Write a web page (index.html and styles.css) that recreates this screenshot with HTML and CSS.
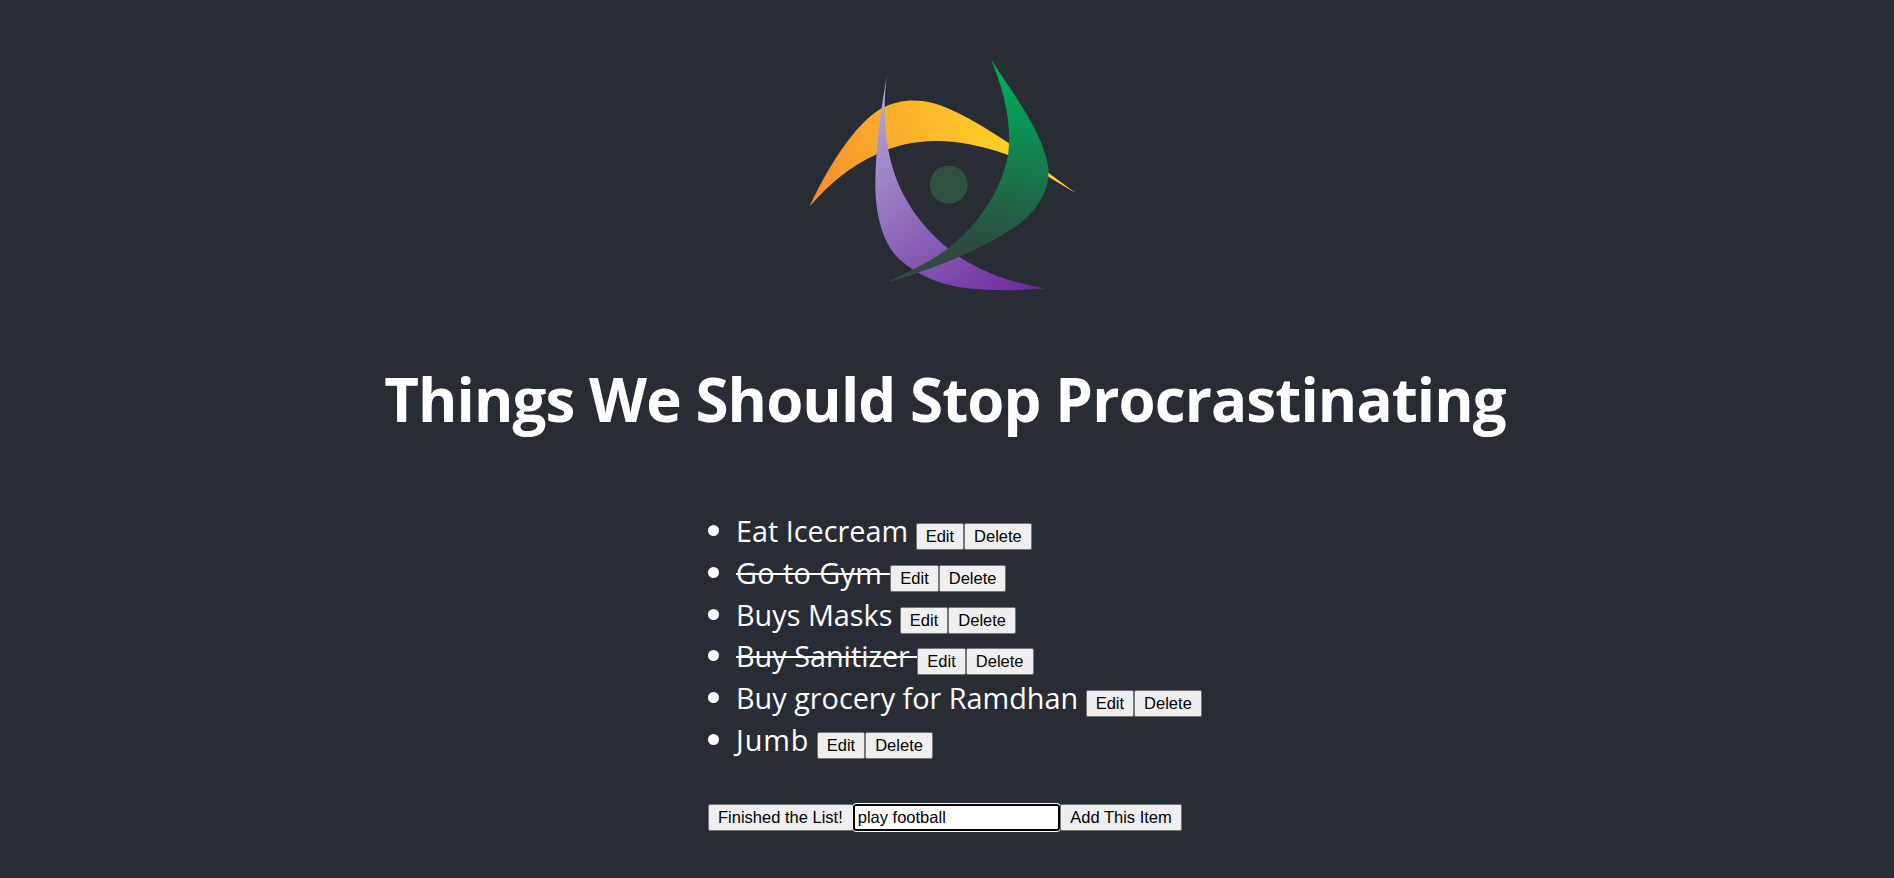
FILE: index.html
```html
<!DOCTYPE html>
<html lang="en">
<head>
<meta charset="utf-8">
<title>Things We Should Stop Procrastinating</title>
<link rel="stylesheet" href="styles.css">
</head>
<body>
<main class="app">
  <svg class="logo" viewBox="0 0 960 810" role="img" aria-label="Logo">
    <defs>
      <linearGradient id="gOrange" x1="88" y1="500" x2="690" y2="300" gradientUnits="userSpaceOnUse">
        <stop offset="0" stop-color="#f78c2f"/>
        <stop offset="1" stop-color="#ffd027"/>
      </linearGradient>
      <linearGradient id="gPurple" x1="300" y1="150" x2="740" y2="760" gradientUnits="userSpaceOnUse">
        <stop offset="0" stop-color="#b0aad8"/>
        <stop offset="1" stop-color="#6f2a9f"/>
      </linearGradient>
      <linearGradient id="gGreen" x1="680" y1="130" x2="620" y2="620" gradientUnits="userSpaceOnUse">
        <stop offset="0" stop-color="#00a859"/>
        <stop offset="1" stop-color="#2c4d3f"/>
      </linearGradient>
    </defs>
    <path fill="url(#gOrange)" d="M88 500C160 350 235 245 305 205C370 172 440 175 510 208C590 245 640 280 685 308L805 398L888 460L805 410L685 345C600 315 530 303 470 303C400 303 340 318 290 343C210 380 150 430 88 500Z"/>
    <path fill="url(#gPurple)" d="M321 105C308 200 312 300 340 390C370 490 440 580 530 645C610 700 700 730 795 745C720 752 640 753 560 745C480 735 410 705 355 655C300 600 284 500 286 420C288 320 302 210 321 105Z"/>
    <circle cx="506" cy="434" r="57" fill="#2f5240"/>
    <path fill="url(#gGreen)" d="M633 58C690 150 780 260 803 370C815 440 780 510 700 565C630 610 550 648 470 678C420 697 370 714 318 728C390 695 450 665 505 625C600 550 665 450 685 340C695 240 670 150 633 58Z"/>
  </svg>
  <h1 class="title">Things We Should Stop Procrastinating</h1>
  <section class="todo">
    <ul class="items">
      <li class="item"><span>Eat Icecream</span> <button class="btn">Edit</button><button class="btn">Delete</button></li>
      <li class="item"><span class="done spaced">Go to Gym </span><button class="btn">Edit</button><button class="btn">Delete</button></li>
      <li class="item"><span>Buys Masks</span> <button class="btn">Edit</button><button class="btn">Delete</button></li>
      <li class="item"><span class="done">Buy Sanitizer </span><button class="btn">Edit</button><button class="btn">Delete</button></li>
      <li class="item"><span>Buy grocery for Ramdhan</span> <button class="btn">Edit</button><button class="btn">Delete</button></li>
      <li class="item"><span class="wide">Jumb</span> <button class="btn">Edit</button><button class="btn">Delete</button></li>
    </ul>
    <div class="controls">
      <button class="btn">Finished the List!</button><input class="field" type="text" value="play football"><button class="btn btn-add">Add This Item</button>
    </div>
  </section>
</main>
</body>
</html>
```
FILE: styles.css
```css
html, body {
  margin: 0;
  height: 100%;
}
body {
  background: #282c34;
  color: #fff;
  overflow: hidden;
}
.app {
  display: flex;
  flex-direction: column;
  align-items: center;
}
.logo {
  display: block;
  width: 320px;
  height: 270px;
  margin: 40px 14px 0 0;
}
.title {
  margin: 47px 4px 0 0;
  font: 700 60px/84px "Open Sans", sans-serif;
  letter-spacing: -0.9px;
  white-space: nowrap;
}
.todo {
  align-self: flex-start;
  margin: 69px 0 0 708px;
}
.items {
  margin: 0;
  padding: 0 0 0 28px;
  list-style: none;
}
.item {
  font: 400 28.8px/41.8px "Open Sans", sans-serif;
  white-space: pre;
}
.item::before {
  content: "";
  display: inline-block;
  width: 11px;
  height: 11px;
  margin: 0 17.5px 0 -28.5px;
  border-radius: 50%;
  background: #fff;
  vertical-align: 6px;
}
.done {
  text-decoration: line-through;
  text-decoration-thickness: 2px;
}
.spaced {
  letter-spacing: 0.4px;
}
.wide {
  letter-spacing: 0.9px;
}
.btn {
  font: 400 16.5px "Liberation Sans", Arial, sans-serif;
  color: #000;
  background: #efefef;
  border: 1px solid #767676;
  border-radius: 2px;
  padding: 3px 9px;
}
.btn-add {
  padding: 3px 9.5px;
}
.controls {
  margin-top: 43px;
  display: flex;
}
.field {
  width: 207px;
  box-sizing: border-box;
  font: 400 16.5px "Liberation Sans", Arial, sans-serif;
  color: #000;
  background: #fff;
  border: 2px solid #000;
  outline: 1px solid #fff;
  border-radius: 3px;
  padding: 1px 3px;
}
```
